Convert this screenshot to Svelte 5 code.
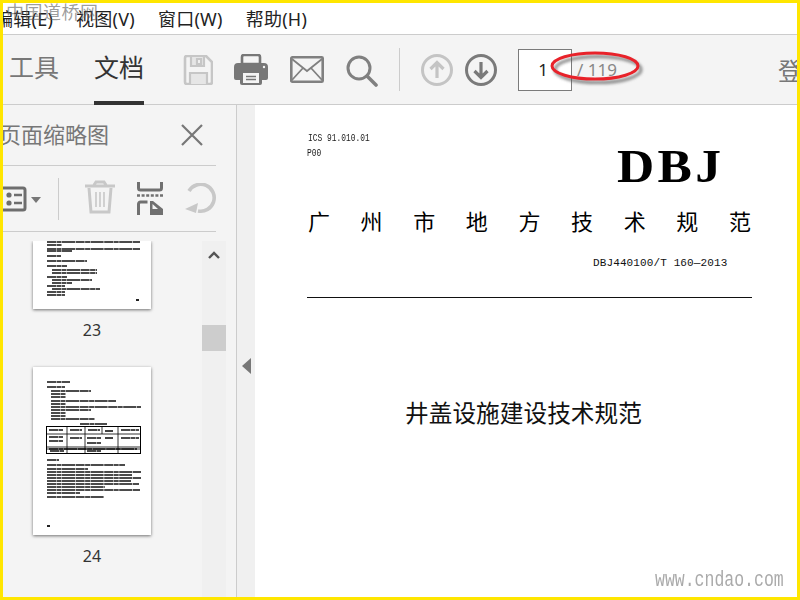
<script>
  const line23 = [[47,242,93],[47,245,15],[47,249,93],[47,251,25],[47,256,14],[47,261,40],[47,266,20],[52,270,45],[52,273,45],[47,277,20],[52,280,40],[52,283,20],[47,286,18],[52,289,48],[47,292,18],[47,295,18]];
  const line24 = [[47,382,23],[47,387,18],[51,391,40],[51,394,15],[51,397,15],[51,401,65],[51,404,15],[51,407,90],[51,410,40],[51,413,15],[51,416,15],[51,419,44],[80,424,27],[47,460,12],[47,465,78],[47,469,41],[47,472,94],[47,475,85],[47,478,94],[47,481,84],[47,484,92],[47,487,58],[47,490,93],[47,493,33],[47,497,57]];
  const cells = [[49,430,14],[70,430,12],[88,430,12],[105,431,8],[121,430,18],[49,437,14],[70,438,12],[87,438,14],[105,438,8],[121,438,18],[49,441,14],[87,443,14],[49,449,88],[50,451,14],[87,451,14]];
  const menus = ['视图(V)', '窗口(W)', '帮助(H)'];
  const titleChars = '广州市地方技术规范'.split('');
</script>

<div class="screen">
  <header class="menubar">
    <span class="menu first">编辑(E)</span>
    {#each menus as m}<span class="menu">{m}</span>{/each}
  </header>

  <nav class="toolbar">
    <span class="tab">工具</span>
    <span class="tab active">文档</span>

    <svg class="ic save" viewBox="0 0 30 30" width="30" height="30">
      <path d="M2 3a2 2 0 0 1 2-2h19l6 6v20a2 2 0 0 1-2 2H4a2 2 0 0 1-2-2z" fill="none" stroke="#c6c6c6" stroke-width="2.6"/>
      <path d="M8 2v9h13V2M14 4h4v5h-4zM7 29V18h17v11" fill="#e6e6e6" stroke="#c6c6c6" stroke-width="2.2"/>
    </svg>
    <svg class="ic print" viewBox="0 0 34 32" width="34" height="32">
      <path d="M8 10V3a2 2 0 0 1 2-2h14a2 2 0 0 1 2 2v7z" fill="none" stroke="#777" stroke-width="2.6"/>
      <path d="M4 9h26a4 4 0 0 1 4 4v11a2 2 0 0 1-2 2h-5v-8H7v8H2a2 2 0 0 1-2-2V13a4 4 0 0 1 4-4z" fill="#777"/>
      <rect x="6" y="17" width="22" height="14" rx="2" fill="#777"/>
      <rect x="9" y="19" width="16" height="10" fill="#f4f4f4"/>
      <path d="M12 22.5h10M12 25.500h10" stroke="#777" stroke-width="1.400"/>
      <circle cx="30" cy="13" r="1.200" fill="#f4f4f4"/>
    </svg>
    <svg class="ic mail" viewBox="0 0 34 27" width="34" height="27">
      <rect x="1.300" y="1.300" width="31.400" height="24.400" rx="1" fill="none" stroke="#808080" stroke-width="2.600"/>
      <path d="M2 3l15 12L32 3M2 24l11-12M32 24L21 12" fill="none" stroke="#808080" stroke-width="1.800"/>
    </svg>
    <svg class="ic search" viewBox="0 0 32 32" width="32" height="32">
      <circle cx="13" cy="13" r="11" fill="none" stroke="#808080" stroke-width="3"/>
      <path d="M21 21l9 9" stroke="#808080" stroke-width="3.600" stroke-linecap="round"/>
    </svg>

    <span class="sep"></span>

    <svg class="ic up" viewBox="0 0 32 32" width="32" height="32">
      <circle cx="16" cy="16" r="14.500" fill="none" stroke="#c4c4c4" stroke-width="3"/>
      <path d="M16 24V9M9.500 15L16 8.500l6.500 6.500" fill="none" stroke="#c4c4c4" stroke-width="3.200"/>
    </svg>
    <svg class="ic down" viewBox="0 0 32 32" width="32" height="32">
      <circle cx="16" cy="16" r="14.500" fill="none" stroke="#7a7a7a" stroke-width="3"/>
      <path d="M16 8v15M9.500 17l6.500 6.500 6.500-6.500" fill="none" stroke="#7a7a7a" stroke-width="3.200"/>
    </svg>

    <span class="pagebox">1</span>
    <span class="total">/ 119</span>
    <span class="login">登录</span>
  </nav>

  <main class="body">
    <aside class="side">
      <div class="side-head">
        <span class="side-title">页面缩略图</span>
        <svg viewBox="0 0 24 24" width="24" height="24" class="close">
          <path d="M2 2l20 20M22 2L2 22" stroke="#777" stroke-width="2.200"/>
        </svg>
      </div>
      <div class="side-tools">
        <svg class="list" viewBox="0 0 40 26" width="40" height="26">
          <rect x="-6" y="2" width="28" height="22" rx="2" fill="none" stroke="#6e6e6e" stroke-width="3"/>
          <circle cx="6" cy="9" r="2.600" fill="#6e6e6e"/><circle cx="6" cy="17" r="2.600" fill="#6e6e6e"/>
          <path d="M11 9h8M11 17h8" stroke="#6e6e6e" stroke-width="2.600"/>
          <path d="M28 11h10l-5 6z" fill="#777"/>
        </svg>
        <span class="vsep"></span>
        <svg class="trash" viewBox="0 0 32 34" width="32" height="34">
          <path d="M1 6h30M10 5l2-3h8l2 3" fill="none" stroke="#c8c8c8" stroke-width="3"/>
          <path d="M5 8l2 24h18l2-24" fill="none" stroke="#c8c8c8" stroke-width="3"/>
          <path d="M12 12v15M16 12v15M20 12v15" stroke="#c8c8c8" stroke-width="1.600"/>
        </svg>
        <svg class="extract" viewBox="0 0 26 33" width="26" height="33">
          <path d="M1.500 0v6a2 2 0 0 0 2 2h19a2 2 0 0 0 2-2V0" fill="none" stroke="#707070" stroke-width="3"/>
          <path d="M0 13.500h26" stroke="#707070" stroke-width="2.600" stroke-dasharray="3 1.600"/>
          <path d="M1.500 33V22a2 2 0 0 1 2-2h7" fill="none" stroke="#707070" stroke-width="3"/>
          <path d="M13 19h3l10 8v6H13z" fill="#707070"/>
          <path d="M15.500 22l5.500 5h-5.500z" fill="#f4f4f4"/>
        </svg>
        <svg class="rotate" viewBox="0 0 32 32" width="32" height="32">
          <path d="M4 8A13.500 13.500 0 1 1 13 28" fill="none" stroke="#c8c8c8" stroke-width="3.600"/>
          <path d="M0 26l13-6-2 10z" fill="#c8c8c8"/>
        </svg>
      </div>

      <div class="thumbs">
        <div class="thumb-col">
          <div class="thumb-first">
            <svg viewBox="33 241 118 68" width="118" height="68">
              {#each line23 as r}<line x1={r[0]} y1={r[1]} x2={r[0] + r[2]} y2={r[1]} class="txt"/>{/each}
              <rect x="136" y="299" width="3" height="2" fill="#222"/>
            </svg>
          </div>
          <span class="num">23</span>
          <div class="thumb-full">
            <svg viewBox="33 367 118 168" width="118" height="168">
              {#each line24 as r}<line x1={r[0]} y1={r[1]} x2={r[0] + r[2]} y2={r[1]} class="txt"/>{/each}
              {#each cells as r}<line x1={r[0]} y1={r[1]} x2={r[0] + r[2]} y2={r[1]} class="txt"/>{/each}
              <rect x="46.500" y="426.500" width="94" height="27" fill="none" stroke="#000"/>
              <path d="M46 434h95M46 447h95M46 449h95M67 427v27M85 427v27M102 427v7M118 427v27" stroke="#000" stroke-width=".8"/>
              <rect x="47" y="525" width="3" height="2" fill="#222"/>
            </svg>
          </div>
          <span class="num">24</span>
          <div class="thumb-next"></div>
        </div>
        <div class="scroll">
          <svg viewBox="0 0 12 8" width="12" height="8" class="chev"><path d="M1 7l5-5 5 5" fill="none" stroke="#555" stroke-width="2.400"/></svg>
          <span class="knob"></span>
        </div>
      </div>
    </aside>

    <div class="strip"><span class="tri"></span></div>

    <article class="page">
      <p class="ics">ICS 91.010.01</p>
      <p class="poo">P00</p>
      <h1 class="dbj">DBJ</h1>
      <div class="title">
        {#each titleChars as c}<span>{c}</span>{/each}
      </div>
      <p class="code">DBJ440100/T 160—2013</p>
      <hr class="rule" />
      <h2 class="name">井盖设施建设技术规范</h2>
    </article>
  </main>

  <span class="mark">中国道桥网</span>
  <span class="url">www.cndao.com</span>
  <svg class="ring" viewBox="0 0 100 40" width="100" height="40">
    <defs><filter id="s" x="-20%" y="-30%" width="140%" height="170%"><feGaussianBlur stdDeviation="1.500"/></filter></defs>
    <ellipse cx="48" cy="21.500" rx="43" ry="13" fill="none" stroke="#555" stroke-width="3" filter="url(#s)" opacity=".7"/>
    <ellipse cx="45" cy="18" rx="43" ry="13" fill="none" stroke="#e8222a" stroke-width="3"/>
  </svg>
  <div class="frame"></div>
</div>

<style>
  :global(body) { margin: 0; background: #fff; }
  p, h1, h2 { margin: 0; font-weight: normal; }
  .screen {
    position: relative; width: 800px; height: 600px; overflow: hidden;
    display: flex; flex-direction: column; background: #fff;
    font-family: "Noto Sans", "Noto Sans CJK SC", sans-serif; color: #333;
  }
  .frame { position: absolute; inset: 0; border: 3px solid #ffe600; pointer-events: none; }

  .menubar { flex: none; display: flex; align-items: center; gap: 23px; padding-top: 3px; box-sizing: border-box; border-bottom: 1px solid #ccc; height: 35px; }
  .menu { font-size: 18px; line-height: 1; color: #222; white-space: nowrap; letter-spacing: .25px; }
  .menu.first { margin-left: -5px; }

  .toolbar { height: 70px; flex: none; box-sizing: border-box; background: #f4f4f4; border-bottom: 1px solid #ccc; display: flex; align-items: center; position: relative; }
  .tab { font-size: 25px; line-height: 1; color: #777; margin-left: 9px; height: 70px; display: flex; align-items: center; box-sizing: border-box; border-bottom: 4px solid transparent; width: 50px; white-space: nowrap; }
  .tab.active { color: #333; margin-left: 35px; border-bottom-color: #333; }
  .ic { flex: none; display: block; }
  .save { margin-left: 39px; }
  .print { margin-left: 21px; }
  .mail { margin-left: 22px; }
  .search { margin-left: 22px; margin-top: 2px; }
  .sep { width: 1px; height: 43px; background: #ccc; margin-left: 21px; flex: none; }
  .up { margin-left: 21px; }
  .down { margin-left: 12px; }
  .pagebox { flex: none; width: 54px; height: 42px; box-sizing: border-box; margin-left: 21px; background: #fff; border: 1px solid #7b7b7b; font-size: 17px; line-height: 40px; text-align: right; padding-right: 23px; color: #222; }
  .total { font-size: 17px; color: #888; margin-left: 5px; white-space: nowrap; }
  .login { font-size: 24px; color: #777; margin-left: 161px; white-space: nowrap; flex: none; }

  .body { flex: 1; min-height: 0; display: flex; }
  .side { width: 237px; flex: none; box-sizing: border-box; background: #f4f4f4; border-right: 1px solid #ccc; display: flex; flex-direction: column; padding-right: 20px; }
  .side-head { height: 61px; flex: none; box-sizing: border-box; border-bottom: 1px solid #ccc; display: flex; align-items: center; justify-content: space-between; padding-right: 12px; }
  .side-title { font-size: 22px; color: #777; margin-left: -1px; margin-bottom: 3px; white-space: nowrap; line-height: 1; }
  .close { display: block; margin-bottom: 1px; }
  .side-tools { height: 66px; flex: none; box-sizing: border-box; border-bottom: 1px solid #ccc; display: flex; align-items: center; }
  .list { display: block; margin-left: 3px; flex: none; }
  .vsep { width: 1px; height: 42px; background: #ccc; margin-left: 15px; flex: none; }
  .trash { display: block; margin-left: 25px; margin-bottom: 3px; flex: none; }
  .extract { display: block; margin-left: 21px; flex: none; }
  .rotate { display: block; margin-left: 22px; flex: none; }

  .thumbs { flex: 1; min-height: 0; display: flex; margin-top: 9px; margin-right: -10px; overflow: hidden; }
  .thumb-col { width: 202px; flex: none; display: flex; flex-direction: column; align-items: center; margin-left: -9px; }
  .thumb-first, .thumb-full, .thumb-next { width: 118px; background: #fff; flex: none; box-shadow: 0 1px 3px rgba(0,0,0,.55); }
  .thumb-first { height: 68px; }
  .thumb-full { height: 168px; }
  .thumb-next { height: 20px; margin-top: 7px; }
  .thumb-first svg, .thumb-full svg { display: block; filter: blur(.3px); }
  .txt { stroke: #111; stroke-width: 1.6; stroke-dasharray: 9 .5 5 .5 13 .6; }
  .num { font-size: 16px; line-height: 20px; color: #333; margin: 11px 0 27px; }
  .scroll { width: 24px; flex: none; margin-left: 9px; background: #f0f0f0; display: flex; flex-direction: column; align-items: center; }
  .chev { display: block; margin-top: 10px; }
  .knob { width: 24px; height: 26px; background: #cdcdcd; margin-top: 66px; flex: none; }

  .strip { width: 18px; flex: none; background: #f0f0f0; display: flex; align-items: center; justify-content: center; padding-top: 27px; box-sizing: border-box; }
  .tri { width: 0; height: 0; border: solid transparent; border-width: 8px 9px 8px 0; border-right-color: #777; }

  .page { flex: 1; min-width: 0; background: #fff; padding: 28px 0 0 52px; color: #000; }
  .ics, .poo { font-family: "Liberation Mono", monospace; font-size: 10px; line-height: 12px; color: #222; transform: scaleX(.79); transform-origin: left; white-space: nowrap; }
  .ics { height: 15px; margin-left: 1px; }
  .dbj { font-family: "Liberation Serif", serif; font-weight: bold; font-size: 46px; line-height: 40px; letter-spacing: 3px; margin: -13px 0 0 310px; color: #000; transform: scaleX(1.12); transform-origin: left; }
  .title { display: flex; justify-content: space-between; font-family: "Noto Sans CJK SC", sans-serif; font-size: 22px; line-height: 30px; margin: 18px 0 0 1px; width: 443px; }
  .code { font-family: "Liberation Mono", monospace; font-size: 11px; line-height: 14px; margin: 21px 0 0 286px; letter-spacing: .12px; color: #111; }
  .rule { border: 0; height: 1px; background: #111; width: 445px; margin: 27px 0 0 0; }
  .name { font-family: "Noto Sans CJK SC", sans-serif; font-size: 23.700px; line-height: 30px; margin: 99px 0 0 98px; color: #111; white-space: nowrap; }

  .mark { position: absolute; left: 6px; top: -2px; font-size: 18px; letter-spacing: .5px; color: rgba(90,90,90,.6); font-family: "Noto Sans CJK SC", sans-serif; line-height: 26px; white-space: nowrap; }
  .url { position: absolute; left: 655px; top: 568px; font-family: "Liberation Mono", monospace; font-size: 22px; line-height: 26px; color: #aaa; transform: scaleX(.75); transform-origin: left; white-space: nowrap; }
  .ring { position: absolute; left: 550px; top: 48px; }
</style>
